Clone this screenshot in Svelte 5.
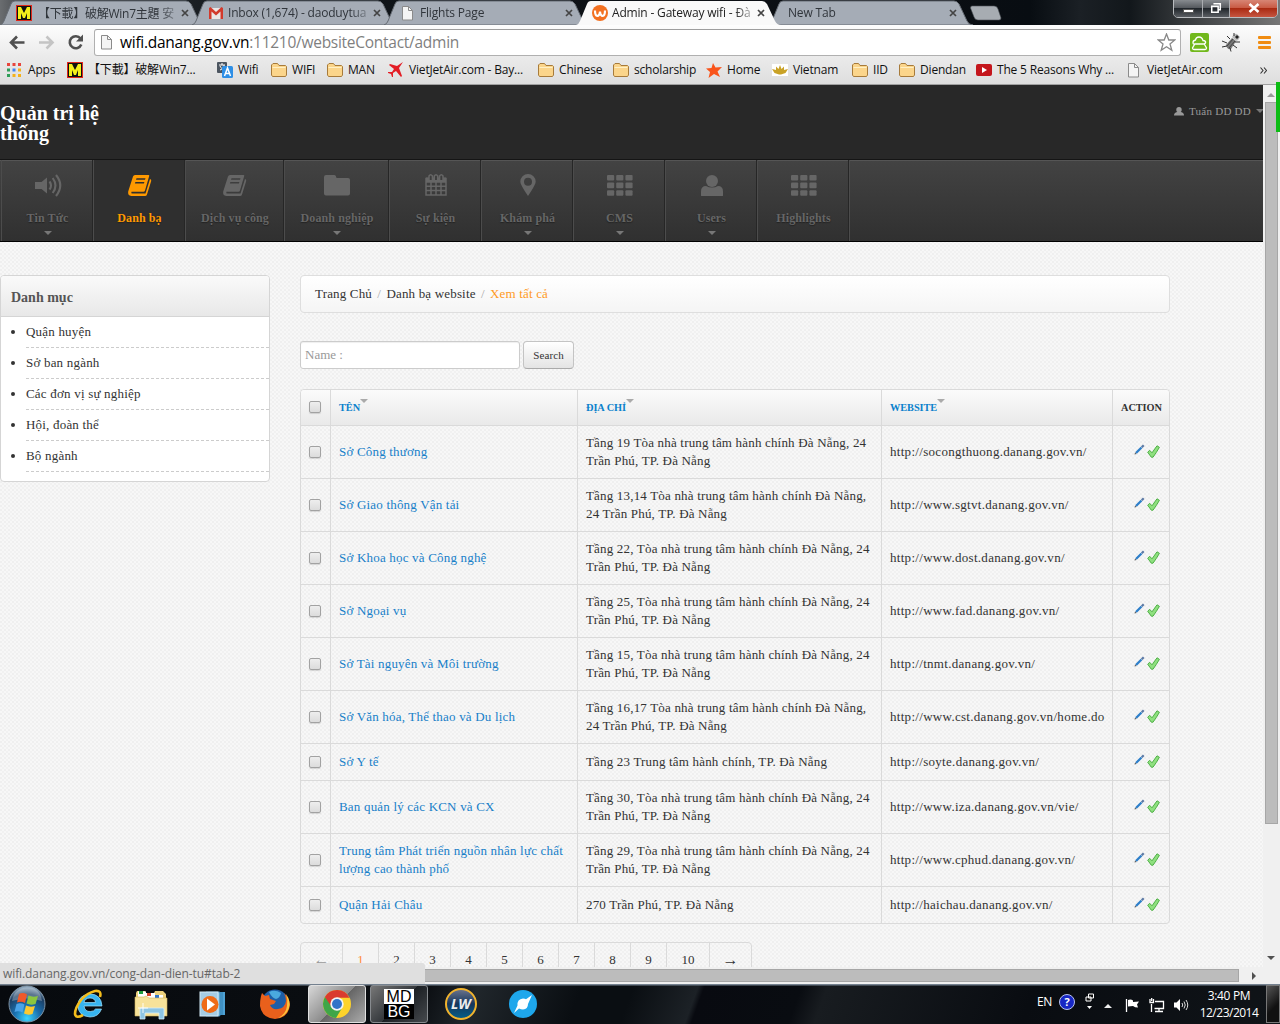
<script>
  const tabs = [
    { icon: 'm', title: '【下載】破解Win7主題 安', cls: 'cjk' },
    { icon: 'gmail', title: 'Inbox (1,674) - daoduytua' },
    { icon: 'page', title: 'Flights Page' },
    { icon: 'w', title: 'Admin - Gateway wifi - Đà', active: true },
    { icon: '', title: 'New Tab' }
  ];
  const bookmarks = [
    { icon: 'apps', label: 'Apps', width: 60 },
    { icon: 'm', label: '【下載】破解Win7...', width: 150 },
    { icon: 'translate', label: 'Wifi', width: 54 },
    { icon: 'folder', label: 'WIFI', width: 56 },
    { icon: 'folder', label: 'MAN', width: 61 },
    { icon: 'vj', label: 'VietJetAir.com - Bay...', width: 150 },
    { icon: 'folder', label: 'Chinese', width: 75 },
    { icon: 'folder', label: 'scholarship', width: 93 },
    { icon: 'star', label: 'Home', width: 66 },
    { icon: 'lotus', label: 'Vietnam', width: 80 },
    { icon: 'folder', label: 'IID', width: 47 },
    { icon: 'folder', label: 'Diendan', width: 77 },
    { icon: 'yt', label: 'The 5 Reasons Why ...', width: 150 },
    { icon: 'page', label: 'VietJetAir.com', width: 132 }
  ];
  const nav = [
    { icon: 'volume', label: 'Tin Tức', width: 92, menu: true },
    { icon: 'book', label: 'Danh bạ', width: 92, active: true },
    { icon: 'book', label: 'Dịch vụ công', width: 99 },
    { icon: 'dir', label: 'Doanh nghiệp', width: 105, menu: true },
    { icon: 'calendar', label: 'Sự kiện', width: 92 },
    { icon: 'pin', label: 'Khám phá', width: 92, menu: true },
    { icon: 'grid', label: 'CMS', width: 92, menu: true },
    { icon: 'user', label: 'Users', width: 92, menu: true },
    { icon: 'grid', label: 'Highlights', width: 92 }
  ];
  const categories = ['Quận huyện', 'Sở ban ngành', 'Các đơn vị sự nghiệp', 'Hội, đoàn thể', 'Bộ ngành'];
  const rows = [
    [['Sở Công thương'], ['Tầng 19 Tòa nhà trung tâm hành chính Đà Nẵng, 24', 'Trần Phú, TP. Đà Nẵng'], 'http://socongthuong.danang.gov.vn/'],
    [['Sở Giao thông Vận tải'], ['Tầng 13,14 Tòa nhà trung tâm hành chính Đà Nẵng,', '24 Trần Phú, TP. Đà Nẵng'], 'http://www.sgtvt.danang.gov.vn/'],
    [['Sở Khoa học và Công nghệ'], ['Tầng 22, Tòa nhà trung tâm hành chính Đà Nẵng, 24', 'Trần Phú, TP. Đà Nẵng'], 'http://www.dost.danang.gov.vn/'],
    [['Sở Ngoại vụ'], ['Tầng 25, Tòa nhà trung tâm hành chính Đà Nẵng, 24', 'Trần Phú, TP. Đà Nẵng'], 'http://www.fad.danang.gov.vn/'],
    [['Sở Tài nguyên và Môi trường'], ['Tầng 15, Tòa nhà trung tâm hành chính Đà Nẵng, 24', 'Trần Phú, TP. Đà Nẵng'], 'http://tnmt.danang.gov.vn/'],
    [['Sở Văn hóa, Thể thao và Du lịch'], ['Tầng 16,17 Tòa nhà trung tâm hành chính Đà Nẵng,', '24 Trần Phú, TP. Đà Nẵng'], 'http://www.cst.danang.gov.vn/home.do'],
    [['Sở Y tế'], ['Tầng 23 Trung tâm hành chính, TP. Đà Nẵng'], 'http://soyte.danang.gov.vn/'],
    [['Ban quản lý các KCN và CX'], ['Tầng 30, Tòa nhà trung tâm hành chính Đà Nẵng, 24', 'Trần Phú, TP. Đà Nẵng'], 'http://www.iza.danang.gov.vn/vie/'],
    [['Trung tâm Phát triển nguồn nhân lực chất', 'lượng cao thành phố'], ['Tầng 29, Tòa nhà trung tâm hành chính Đà Nẵng, 24', 'Trần Phú, TP. Đà Nẵng'], 'http://www.cphud.danang.gov.vn/'],
    [['Quận Hải Châu'], ['270 Trần Phú, TP. Đà Nẵng'], 'http://haichau.danang.gov.vn/']
  ];
  const pages = ['←', '1', '2', '3', '4', '5', '6', '7', '8', '9', '10', '→'];
</script>

{#snippet icon(name)}
  {#if name === 'm'}
    <svg width="16" height="16" viewBox="0 0 16 16"><rect x=".5" y=".5" width="15" height="15" fill="#111" stroke="#e0281c" /><path d="M2 14V2h3l3 6 3-6h3v12h-3V8l-2 5H7L5 8v6z" fill="#f4f01a" /></svg>
  {:else if name === 'gmail'}
    <svg width="16" height="16" viewBox="0 0 16 16"><path d="M1 3h14v11H1z" fill="#e9e6e6" /><path d="M1 14V3l1.500-1L8 7l5.500-5L15 3v11h-2.500V6.500L8 10.500l-4.500-4V14z" fill="#d23a2c" /></svg>
  {:else if name === 'page'}
    <svg width="16" height="16" viewBox="0 0 16 16"><path d="M2.500 1.500h6l4 4v9.500h-10z" fill="#f4f4f4" stroke="#8b8b8b" /><path d="M8.500 1.500v4h4" fill="none" stroke="#8b8b8b" /></svg>
  {:else if name === 'w'}
    <svg width="16" height="16" viewBox="0 0 16 16"><circle cx="8" cy="8" r="8" fill="#f37121" /><path d="M3 5.500c0 7 4.500 7 5 1 .5 6 5 6 5-1" fill="none" stroke="#fff" stroke-width="2.200" /></svg>
  {:else if name === 'apps'}
    <svg width="14" height="14" viewBox="0 0 14 14"><path d="M0 0h3v3H0zM5.500 0h3v3h-3zM11 0h3v3h-3z" fill="#e8453c" /><path d="M0 5.500h3v3H0z" fill="#2f9e58" /><path d="M5.500 5.500h3v3h-3z" fill="#4285f4" /><path d="M11 5.500h3v3h-3zM5.500 11h3v3h-3zM11 11h3v3h-3z" fill="#f5b21a" /><path d="M0 11h3v3H0z" fill="#2f9e58" /></svg>
  {:else if name === 'translate'}
    <svg width="16" height="16" viewBox="0 0 16 16"><rect width="10" height="11" rx="1" fill="#4c5560" /><path d="M2 3h6M5 1v2M3 8c3-1 4-3 4-5M3 4c1 2 2 3 4 4" stroke="#fff" fill="none" /><rect x="5" y="4" width="11" height="12" rx="1.500" fill="#2e8fe6" /><path d="M7.500 14l3-8 3 8M8.500 11.500h4" stroke="#fff" stroke-width="1.500" fill="none" /></svg>
  {:else if name === 'folder'}
    <svg width="16" height="14" viewBox="0 0 16 14"><path d="M.5 12V2L2 .5h4.500L8 2.500h6.500l1 1V12l-1 1.500h-13z" fill="#fbd58b" stroke="#a77b3b" /><path d="M1.500 4.500h13" stroke="#fff0c4" /></svg>
  {:else if name === 'vj'}
    <svg width="16" height="16" viewBox="0 0 16 16"><path d="M15 0l-4 6 3 8-1 1-5-6-3 2v4H4l-1-3-3-1v-1h4l2-3-5-4 1-1 7 2z" fill="#e31d25" /></svg>
  {:else if name === 'star'}
    <svg width="16" height="15" viewBox="0 0 16 15"><path d="M7 0l2.500 4.500L16 4l-4.500 4.500L14 14l-6-3-5.500 4L4 9 0 5.500l5.500-.5z" fill="#f9541b" /></svg>
  {:else if name === 'lotus'}
    <svg width="16" height="12" viewBox="0 0 16 12"><path d="M0 0h16v12H0z" fill="#fff" /><path d="M8 1l1.500 4L12 2.500 12 6l4-1-2.500 4L9 10.500H7L2.500 9 0 5l4 1V2.500L6.500 5z" fill="#c9a227" /></svg>
  {:else if name === 'yt'}
    <svg width="16" height="12" viewBox="0 0 16 12"><rect width="16" height="12" rx="2" fill="#c4161c" /><path d="M6 3l5 3-5 3z" fill="#fff" /></svg>
  {:else if name === 'volume'}
    <svg width="28" height="24" viewBox="0 0 28 24"><path d="M1 9h6.500L13 4.500v16L7.500 16H1z" fill="currentColor" /><path d="M15.500 8.500q3 4 0 8M18.700 5q5.500 7.500 0 15M22 2q8.500 10.500 0 21" fill="none" stroke="currentColor" stroke-width="2.100" /></svg>
  {:else if name === 'book'}
    <svg width="26" height="24" viewBox="0 0 26 24"><g transform="translate(0 .5)"><path fill-rule="evenodd" d="M8 1.500h13.500q1 0 .7 1L18 17q-.4 1.200-1.500 1.200H4.500q-.8 1.800.8 1.900H18.500L23 5.500q1.600.5 1.200 2L20 21q-.5 1.500-2 1.500H4.300Q.5 22 1.200 18L6 3q.5-1.500 2-1.500zM9.500 4.800l-.5 1.500h9l.5-1.500zM8.400 8.400l-.5 1.500h9l.5-1.500z" fill="currentColor" /></g></svg>
  {:else if name === 'dir'}
    <svg width="26" height="24" viewBox="0 0 26 24"><path d="M0 4Q0 2 2 2h8.500q1.500 0 2 3H24q2 0 2 2v13.500q0 2-2 2H2q-2 0-2-2z" fill="currentColor" /></svg>
  {:else if name === 'calendar'}
    <svg width="24" height="24" viewBox="0 0 24 24"><path d="M2 5.500h20v16.500H2zM2 9h20M2 13.200h20M2 17.500h20M7 9v13M12 9v13M17 9v13" fill="none" stroke="currentColor" stroke-width="1.500" /><path d="M2 4.500h20V9H2z" fill="currentColor" /><path d="M5 7V3q1.700-2.500 3.400 0v4M10.300 7V3q1.700-2.500 3.400 0v4M15.600 7V3q1.700-2.500 3.400 0v4" fill="#3d3d3d" stroke="currentColor" stroke-width="1.500" /></svg>
  {:else if name === 'pin'}
    <svg width="16" height="24" viewBox="0 0 16 24"><path fill-rule="evenodd" d="M8 1a7.700 7.700 0 0 1 7.700 7.700Q15.700 11.500 8 23 .3 11.500 .3 8.700A7.700 7.700 0 0 1 8 1zm0 3.800a4 4 0 1 0 0 8 4 4 0 0 0 0-8z" fill="currentColor" /></svg>
  {:else if name === 'grid'}
    <svg width="26" height="24" viewBox="0 0 26 24"><g fill="currentColor">{#each [2, 9.600, 17.200] as y}{#each [0, 9.200, 18.400] as x}<rect {x} {y} width="7.200" height="5.600" rx="1" />{/each}{/each}</g></svg>
  {:else if name === 'user'}
    <svg width="22" height="24" viewBox="0 0 22 24"><circle cx="11" cy="8" r="6" fill="currentColor" /><path d="M0 22.500V18.500q0-5.500 5-5.500 6 3 12 0 5 0 5 5.500v4q0 .5-1 .5H1q-1 0-1-.5z" fill="currentColor" /></svg>
  {/if}
{/snippet}

<div class="screen">
  <div class="tabstrip">
    {#each tabs as t}
      <div class="tab" class:active={t.active}>
        <svg class="shape" width="206" height="25" viewBox="0 0 206 25"><path d="M0 25Q3 24 4 21L11 4Q12 1 15 1H186Q189 1 191 4L199 21Q201 25 205 25z" /></svg>
        {#if t.icon}<span class="fav">{@render icon(t.icon)}</span>{/if}
        <span class="title {t.cls ?? ''}">{t.title}</span>
        <svg class="close" width="8" height="8" viewBox="0 0 8 8"><path d="M1 1l6 6M7 1L1 7" stroke="#444" stroke-width="1.700" /></svg>
      </div>
    {/each}
    <svg class="newtab" width="32" height="16" viewBox="0 0 32 16"><path d="M2 1h22q3 0 4 3l3 9q0 2-2 2H8q-3 0-4-3L.5 3q0-2 1.500-2z" fill="#a7acb2" stroke="#4e5257" stroke-width=".6" /></svg>
    <div class="winbtns">
      <span class="wb min"><i></i></span>
      <span class="wb max"><svg width="12" height="12" viewBox="0 0 14 13"><path d="M4 1.500h8v7h-2M2 4.500h7.500v7H2z" fill="none" stroke="#fff" stroke-width="1.800" /></svg></span>
      <span class="wb x"><svg width="12" height="10" viewBox="0 0 12 10"><path d="M1.500 1l9 8M10.500 1l-9 8" stroke="#fff" stroke-width="2.600" /></svg></span>
    </div>
  </div>

  <div class="toolbar">
    <svg class="navbtns" width="94" height="28" viewBox="0 0 94 28"><g fill="none" stroke-width="2.600"><path d="M24.500 14.500H12M17 8.500l-6 6 6 6" stroke="#505050" /><path d="M39 14.500h13M46.500 8.500l6 6-6 6" stroke="#c4c4c4" /><path d="M80.500 10.500a6 6 0 1 0 .8 6" stroke="#505050" /></g><path d="M83 6.500v7h-7z" fill="#505050" /></svg>
    <div class="omnibox">
      <span class="doc">{@render icon('page')}</span>
      <span class="url"><b>wifi.danang.gov.vn</b>:11210/websiteContact/admin</span>
      <svg width="19" height="19" viewBox="0 0 19 19"><path d="M9.500 1l2.300 6h6l-4.800 4 1.800 6.300-5.300-3.600-5.300 3.600L6 11 1.200 7h6z" fill="#fff" stroke="#888" stroke-width="1.300" /></svg>
    </div>
    <svg class="ext" width="19" height="19" viewBox="0 0 19 19"><rect width="19" height="19" rx="2" fill="#71b81c" /><path d="M4.500 11H14q2-.5 1.500-2.500-1-1-2.500-1-1-3.500-4-3.500T5.500 7Q3 7.500 3 9.500T4.500 11zM4.500 11.500L2.500 15q0 1.500 1.500 1.500h11q1.500 0 1.500-1.500l-2-3.500" fill="none" stroke="#fff" stroke-width="1.300" /></svg>
    <svg class="ext bug" width="20" height="19" viewBox="0 0 20 19"><path d="M4 12l6-7 4 3-5 8q-4 1-5-4z" fill="#777" /><path d="M5 13l6-7M7 15l6-7" stroke="#444" /><path d="M10 4q2-4 5-3l3 3q-1 3-4 4z" fill="#bbb" /><path d="M13 4l2-2 2 2-2 2z" fill="#222" /><path d="M0 8l5 2M0 14l5-1M8 15l1 3.500M11 12l4 3M8 6L5 3M13 9l5 0M12 3V0" stroke="#333" fill="none" /></svg>
    <span class="menu"><i></i><i></i><i></i></span>
  </div>

  <div class="bookmarks">
    {#each bookmarks as b}
      <span class="bm" style:width="{b.width}px"><span class="bi">{@render icon(b.icon)}</span><span class="bl">{b.label}</span></span>
    {/each}
    <svg class="more" width="7" height="7" viewBox="0 0 7 7"><path d="M.5.5l2.500 3-2.500 3M4 .5l2.500 3-2.500 3" fill="none" stroke="#333" stroke-width="1.100" /></svg>
  </div>

  <div class="viewport">
    <div class="page">
      <header>
        <h1>Quản trị hệ thống</h1>
        <div class="account">
          <svg width="10" height="9" viewBox="0 0 10 9"><circle cx="5" cy="2.800" r="2.700" fill="#999" /><path d="M0 8.500Q0 5.500 3 5h4q3 .5 3 3.500z" fill="#999" /></svg>
          <span>Tuấn DD DD</span><i class="caret"></i>
        </div>
      </header>
      <nav>
        {#each nav as n}
          <a class:active={n.active} style:width="{n.width}px">
            <span class="ni">{@render icon(n.icon)}</span>
            <span class="nl">{n.label}</span>
            {#if n.menu}<i class="caret"></i>{/if}
          </a>
        {/each}
      </nav>

      <div class="content">
        <aside>
          <h2>Danh mục</h2>
          <ul>
            {#each categories as c}<li>{c}</li>{/each}
          </ul>
        </aside>
        <main>
          <div class="crumbs"><span>Trang Chủ</span><em>/</em><span>Danh bạ website</span><em>/</em><span class="here">Xem tất cả</span></div>
          <div class="search"><div class="field">Name :</div><div class="btn">Search</div></div>
          <table>
            <colgroup><col class="c1" /><col class="c2" /><col class="c3" /><col class="c4" /><col class="c5" /></colgroup>
            <thead>
              <tr>
                <th><span class="check"></span></th>
                <th class="sort"><div class="head">TÊN<i class="caret"></i></div></th>
                <th class="sort"><div class="head">ĐỊA CHỈ<i class="caret"></i></div></th>
                <th class="sort"><div class="head">WEBSITE<i class="caret"></i></div></th>
                <th><div class="head">ACTION</div></th>
              </tr>
            </thead>
            <tbody>
              {#each rows as [name, address, site]}
                <tr class:single={address.length === 1}>
                  <td><span class="check"></span></td>
                  <td class="name">{#each name as line}<div>{line}</div>{/each}</td>
                  <td class="addr">{#each address as line}<div>{line}</div>{/each}</td>
                  <td class="site">{site}</td>
                  <td>
                    <div class="tools">
                      <svg width="11" height="11" viewBox="0 0 11 11"><path d="M2 9l5.500-5.500" stroke="#2d7fca" stroke-width="2.300" /><path d="M7.700 3.300l2-2" stroke="#5a78a4" stroke-width="2.200" /><path d="M.5 10.500l.6-2 1.400 1.400z" fill="#555" /></svg>
                      <svg class="tick" width="13" height="13" viewBox="0 0 13 13"><path d="M.7 7.200L2.700 5.300 5 7.800 10 .8l2.400 1.500Q9.500 7.500 6 12.200H4.300z" fill="#8fe07f" stroke="#4fb047" stroke-linejoin="round" /></svg>
                    </div>
                  </td>
                </tr>
              {/each}
            </tbody>
          </table>
          <div class="pager">
            {#each pages as p}<span class:prev={p === '←'} class:next={p === '→'} class:current={p === '1'} class:wide={p === '10'}>{p}</span>{/each}
          </div>
        </main>
      </div>
    </div>
    <div class="vscroll"><i class="up"></i><div class="vthumb"></div><i class="down"></i></div>
  </div>
  <div class="hscroll"><div class="hthumb"></div><i></i></div>
  <div class="status">wifi.danang.gov.vn/cong-dan-dien-tu#tab-2</div>
  <div class="marker"></div>

  <div class="taskbar">
    <span class="start">
      <svg width="38" height="38" viewBox="0 0 38 38"><defs><radialGradient id="orb" cx=".5" cy=".9" r=".9"><stop offset="0" stop-color="#39d5ff" /><stop offset=".4" stop-color="#1a6fae" /><stop offset=".75" stop-color="#1c3e63" /><stop offset="1" stop-color="#9fb8cc" /></radialGradient></defs><circle cx="19" cy="19" r="18" fill="url(#orb)" stroke="#7e93a5" /><path d="M4 16Q6 3 19 2.500T34 16q-15-5-30 0z" fill="#fff" opacity=".28" /><path d="M11 9q4-2 8 .5l-2 8.500q-4-2-8-.5z" fill="#f0592a" /><path d="M20.500 10.500q4 2 9.500.5l-2.500 8q-5 1.500-9-.5z" fill="#8cc63f" /><path d="M8.500 19q4-1.500 8 .5l-2 8q-4-2-8-.5z" fill="#4aa3e8" /><path d="M18 20.500q4 2 9 .5l-2.500 8q-4.500 1.500-8.500-.5z" fill="#fdc92f" /></svg>
    </span>
    <span class="app">
      <svg width="34" height="34" viewBox="0 0 34 34"><path d="M30 19H12q1 6 6.500 5.500 3.500 0 5-2.500h6q-3 8-11.500 8Q6 29 6 18.500T18 7q11 0 12 12zM12 15.500h11.500Q23 11 18 11t-6 4.500z" fill="#37b4ef" stroke="#9fe2ff" stroke-width=".7" fill-rule="evenodd" /><path d="M28 10q2-7-5-6-8 2-14 9-6 8-6 14 1 5 8 1" fill="none" stroke="#f4bd1c" stroke-width="2.600" /></svg>
    </span>
    <span class="app">
      <svg width="34" height="32" viewBox="0 0 34 32"><path d="M2 5l1-2h8l1 2h8l1-2h8l3 3v22H2z" fill="#ecd07c" /><path d="M4 3.500h8v6H4zM12 5h9v6h-9zM20 7h9v6h-9z" fill="#fff" /><path d="M5 3h4v3H5z" fill="#1f9c3c" /><path d="M13 5h4v3h-4z" fill="#d8432b" /><path d="M21 7h4v3h-4z" fill="#3377cc" /><path d="M1 9h9l2-1 3 2h18v18H1z" fill="#f7e29a" stroke="#d2b25c" stroke-width=".6" /><path d="M6 31V21q0-1 1-1h22q1 0 1 1v10h-5v-6H11v6z" fill="#8ec5e4" stroke="#d5effc" stroke-width=".8" /><path d="M9 15v10M4 20h10" stroke="#fff" stroke-width=".9" /></svg>
    </span>
    <span class="app">
      <svg width="28" height="28" viewBox="0 0 28 28"><path d="M10 2h16v23H10z" fill="#4ea1d4" /><path d="M7 2h14v24H7zM23 2v23" fill="#80c0e4" stroke="#2f78a8" stroke-width=".8" /><rect x="1" y="2" width="18" height="24" fill="#a5cde5" stroke="#d4e9f5" /><circle cx="11" cy="14.500" r="8.500" fill="#ef6b17" /><path d="M8 8.500l8 6-8 6z" fill="#fff" /></svg>
    </span>
    <span class="app">
      <svg width="32" height="32" viewBox="0 0 32 32"><circle cx="16" cy="15" r="13.500" fill="#1d5ea8" /><path d="M10 4q6-3 12 1-1 5-5 6-4-1-7-7z" fill="#4aa9df" /><path d="M2 8l1-3 3 3 4-1 1 4 6 2-2 3-4 1q2 5 8 4 7-1 8-8 0-4-2-8 5 5 6 11-1 14-15 15Q3 30 1 18q0-6 1-10z" fill="#e9601c" /><path d="M27 6q5 7 3 14-3 8-11 10 8-4 9-12 1-6-1-12z" fill="#fbc53b" /></svg>
    </span>
    <span class="app on">
      <svg width="30" height="30" viewBox="0 0 30 30"><circle cx="15" cy="15" r="14" fill="#fdd32b" /><path d="M15 15L2.900 8A14 14 0 0 0 14 29l6-10z" fill="#3fa648" /><path d="M2.900 8A14 14 0 0 1 27.500 8.700H15L9 17z" fill="#da3b2e" /><circle cx="15" cy="15" r="6.700" fill="#f3f3f3" /><circle cx="15" cy="15" r="5" fill="#3274c8" /></svg>
    </span>
    <span class="app run"><span class="mdbg"><b>MD</b><b class="bg">BG</b></span></span>
    <span class="app"><span class="lw">LW</span></span>
    <span class="app">
      <svg width="28" height="28" viewBox="0 0 28 28"><circle cx="14" cy="14" r="14" fill="#1ea7ec" /><path d="M23 5l-4 9q0 5-5 5.500-2 0-4-1L5 23l3.500-7.500Q8 9 14 8.500q2 0 3 .7z" fill="#fff" /></svg>
    </span>
    <div class="tray">
      <span class="lang">EN</span>
      <span class="help">?</span>
      <svg class="t1" width="11" height="18" viewBox="0 0 11 18"><path d="M3.500 1h5v4h-5zM1 4h5v4H1z" fill="#111" stroke="#fff" /><path d="M2 13h5l-2.500 3z" fill="#fff" /></svg>
      <svg class="t2" width="8" height="4" viewBox="0 0 8 4"><path d="M4 0l4 4H0z" fill="#eee" /></svg>
      <svg class="t3" width="16" height="15" viewBox="0 0 16 15"><path d="M1.500 1v13" stroke="#fff" stroke-width="1.300" /><path d="M3 2q3-1 5 .5V4l6-.5-2 3 1 3q-3 0-5-1.500L3 8.500z" fill="#fff" /></svg>
      <svg class="t4" width="16" height="15" viewBox="0 0 16 15"><path d="M6 3.500h8.500v7H5.500M10 11v2.500M6 13.500h8M2.500 6v8M1 1v3.500h3.500V1M2.700 0v3" fill="none" stroke="#fff" stroke-width="1.300" /></svg>
      <svg class="t5" width="16" height="14" viewBox="0 0 16 14"><path d="M1 4.500h2.500L7 1v12L3.500 9.500H1z" fill="#fff" /><path d="M9 5q1.500 2 0 4M11 3.500q2.500 3.500 0 7M13 2q3.500 5 0 10" fill="none" stroke="#ddd" /></svg>
      <div class="clock"><span>3:40 PM</span><span>12/23/2014</span></div>
      <span class="peek"></span>
    </div>
  </div>
</div>

<style>
  :global(body) { overflow: hidden; }
  .screen { position: relative; width: 1280px; height: 1024px; overflow: hidden; display: flex; flex-direction: column; font-family: 'Open Sans', 'Noto Sans', 'Noto Sans CJK TC', sans-serif; font-size: 12px; color: #111; }
  .screen * { box-sizing: border-box; }
  svg { display: block; flex: none; }

  .tabstrip { height: 25px; flex: none; display: flex; padding-left: 3px; background: linear-gradient(90deg, #6a6d70 0, #3a3d41 30px, #10151a 250px, #0b0e13 900px, #080d12 1030px, #1b2025 1080px, #12171b 1130px, #777 1280px); }
  .tab { position: relative; width: 192px; height: 25px; display: flex; align-items: center; padding-left: 13px; z-index: 1; }
  .tab.active { z-index: 3; }
  .shape { position: absolute; left: -3px; top: 0; fill: #a5acb6; stroke: #666c74; stroke-width: 1; z-index: -1; }
  .active .shape { fill: #f9f9f9; stroke: none; }
  .fav { width: 20px; flex: none; }
  .title { width: 146px; white-space: nowrap; letter-spacing: -0.18px; color: #30353b; mask-image: linear-gradient(90deg, #000 122px, transparent 148px); }
  .active .title { color: #222; }
  .title.cjk { padding-left: 2px; letter-spacing: -0.25px; }
  .tab:nth-child(5) .title { padding-left: 4px; width: 166px; }
  .close { margin-left: -1px; }
  .newtab { margin: 5px 0 0 7px; }
  .winbtns { display: flex; margin: -2px 2px 0 auto; width: 105px; height: 20px; border: 1px solid #b9bcbf; border-radius: 0 0 5px 5px; overflow: hidden; }
  .wb { display: flex; align-items: center; justify-content: center; width: 27px; border-right: 1px solid #a9acb0; background: linear-gradient(#8d9195, #565a5f 48%, #20252a 52%, #5a5e63); }
  .min { width: 29px; }
  .min i { width: 11px; height: 4px; background: #fff; border: 1px solid #555; margin-top: 5px; }
  .x { flex: 1; border: 0; background: linear-gradient(#d98b7b, #c95b45 48%, #a92a12 52%, #c65540); }

  .toolbar { height: 31px; flex: none; display: flex; align-items: center; background: linear-gradient(#fdfdfd, #ebebeb); padding-top: 3px; }
  .omnibox { width: 1087px; height: 27px; border: 1px solid #b0b0b0; border-top-color: #9d9d9d; border-radius: 3px; background: #fff; display: flex; align-items: center; padding: 0 4px; }
  .doc { width: 21px; }
  .url { flex: 1; font-size: 15.5px; letter-spacing: -0.27px; color: #7f7f7f; white-space: nowrap; }
  .url b { font-weight: 400; color: #000; }
  .ext { margin-left: 9px; }
  .bug { margin-left: 13px; }
  .menu { width: 13px; margin-left: 16px; display: flex; flex-direction: column; gap: 2px; }
  .menu i { height: 3px; background: #f08c11; border-radius: 1px; }

  .bookmarks { height: 29px; flex: none; display: flex; align-items: center; background: linear-gradient(#ebebeb, #dedede); border-bottom: 1px solid #a0a0a0; padding-left: 7px; letter-spacing: -0.18px; color: #111; }
  .bm { flex: none; display: flex; align-items: center; white-space: nowrap; }
  .bi { width: 21px; flex: none; }
  .bl { margin-top: -2px; }
  .more { margin: 1px 0 0 2px; }

  .viewport { display: flex; height: 882px; flex: none; overflow: hidden; }
  .page { width: 1263px; overflow: hidden; font: 13px/18px 'Liberation Serif', serif; color: #333; background-color: #f7f7f7; background-image: radial-gradient(circle at 1px 1px, #efefef 0.8px, transparent 1px), radial-gradient(circle at 3px 3px, #f1f1f1 0.8px, transparent 1px); background-size: 4px 4px; }
  header { height: 74px; background: #282828; display: flex; justify-content: space-between; }
  h1 { margin: 18px 0 0; width: 120px; font-size: 20px; line-height: 20px; font-weight: 700; color: #fff; }
  .account { display: flex; align-items: center; height: 20px; margin: 16px -1px 0 0; font-size: 11px; letter-spacing: 0.25px; color: #999; }
  .account span { margin: 0 5px 0 5px; width: 62px; white-space: nowrap; }
  .caret { display: block; border: 4px solid transparent; border-bottom: 0; border-top-color: #777; width: 0; height: 0; }
  nav { height: 83px; display: flex; border-top: 1px solid #151515; border-bottom: 1px solid #000; background: linear-gradient(#434343, #303030); box-shadow: inset 0 1px #555; padding-left: 1px; }
  nav a { height: 81px; display: flex; flex-direction: column; align-items: center; color: #666; font-weight: 700; font-size: 12px; letter-spacing: 0.1px; border-left: 1px solid #4c4c4c; border-right: 1px solid #262626; padding: 13px 0 0 1px; text-shadow: 0 1px 1px #222; }
  nav a:last-child { box-shadow: 1px 0 #4c4c4c; }
  nav a.active { background: #2f2f2f; color: #ff9900; }
  .ni { height: 24px; }
  .nl { margin-top: 12px; line-height: 18px; white-space: nowrap; }
  nav .caret { margin-top: 4px; }

  .content { display: flex; gap: 30px; padding-top: 33px; letter-spacing: 0.2px; }
  aside { width: 270px; height: 207px; border: 1px solid #d5d5d5; border-radius: 4px; background: #fff; overflow: hidden; }
  h2 { margin: 0; height: 41px; padding: 2px 10px 0; font-size: 14px; line-height: 39px; color: #555; border-bottom: 1px solid #d5d5d5; background: linear-gradient(#fafafa, #e8e8e8); letter-spacing: 0; }
  ul { margin: 0; padding: 0 0 0 25px; }
  li { height: 31px; line-height: 30px; border-bottom: 1px dashed #ccc; }
  main { width: 870px; }
  .crumbs { height: 38px; border: 1px solid #dedede; border-radius: 4px; background: linear-gradient(#fff, #f5f5f5); padding: 0 14px; line-height: 36px; display: flex; letter-spacing: 0.17px; }
  .crumbs em { font-style: normal; color: #aaa; margin: 0 5.300px; }
  .here { color: #ff9a1f; }
  .search { display: flex; gap: 3px; margin-top: 28px; height: 28px; }
  .field { width: 220px; border: 1px solid #ccc; border-radius: 3px; background: #fff; color: #999; padding-left: 4px; line-height: 26px; letter-spacing: 0; box-shadow: inset 0 1px 1px #0001; }
  .btn { width: 51px; border: 1px solid #c4c4c4; border-bottom-color: #aaa; border-radius: 4px; background: linear-gradient(#fff, #e4e4e4); font-size: 11px; line-height: 27px; text-align: center; letter-spacing: 0.1px; }
  table { margin-top: 20px; width: 870px; table-layout: fixed; border: 1px solid #dadada; border-radius: 4px; border-spacing: 0; }
  .c1 { width: 29px; } .c2 { width: 247px; } .c3 { width: 304px; } .c4 { width: 231px; } .c5 { width: 57px; }
  th { height: 35px; padding: 0 8px; text-align: left; font-size: 10.3px; letter-spacing: -0.05px; background: linear-gradient(#fbfbfb, #e9e9e9); white-space: nowrap; }
  th:first-child { border-top-left-radius: 3px; }
  th:last-child { border-top-right-radius: 3px; }
  th + th, td + td { border-left: 1px solid #dadada; }
  .sort { color: #0a81cc; }
  .head { display: flex; }
  .head .caret { border-top-color: #aaa; }
  td { height: 53px; padding: 0 8px; border-top: 1px solid #dadada; white-space: nowrap; }
  .single td { height: 37px; }
  .name { color: #1880c9; letter-spacing: 0.19px; }
  .addr { letter-spacing: 0.18px; }
  .site { letter-spacing: 0.3px; }
  .check { display: block; width: 12px; height: 12px; border: 1px solid #a2a2a2; border-radius: 2px; background: linear-gradient(#eee, #dcdcdc); box-shadow: 0 1px 1px #0002; }
  th .check { margin-top: -1px; }
  .tools { display: flex; justify-content: flex-end; gap: 2px; margin-top: -3px; padding-right: 1px; }
  .tick { margin-top: 1px; }
  .pager { display: flex; width: 452px; height: 38px; margin-top: 18px; border: 1px solid #dadada; border-radius: 4px; line-height: 34px; text-align: center; letter-spacing: 0; }
  .pager span { width: 36px; border-left: 1px solid #dadada; }
  .pager .prev { width: 41px; border-left: 0; color: #999; font-size: 16px; }
  .pager .next { width: 42px; font-size: 16px; }
  .pager .wide { width: 43px; }
  .pager .current { color: #ff8a3c; background: #f4f4f4; }

  .vscroll { width: 17px; background: #f0f0f0; padding: 8px 0 0 2px; display: flex; flex-direction: column; }
  .vscroll i, .hscroll i { width: 0; height: 0; border: 4px solid transparent; }
  .vscroll .up { border-top: 0; border-bottom-color: #999; margin-left: 2px; }
  .vthumb { margin-top: 5px; width: 13px; height: 722px; background: #bcbcbc; border: 1px solid #a6a6a6; }
  .vscroll .down { border-bottom: 0; border-top-color: #505050; margin: 132px 0 0 2px; }
  .hscroll { height: 17px; flex: none; background: #f0f0f0; display: flex; align-items: center; }
  .hthumb { width: 1239px; height: 13px; background: #bcbcbc; border: 1px solid #a6a6a6; }
  .hscroll i { border-right: 0; border-left-color: #505050; margin-left: 13px; }
  .status { position: absolute; left: 0; top: 963px; width: 425px; height: 21px; padding-left: 3px; line-height: 21px; background: #dfdfdf; border-top-right-radius: 3px; color: #666; letter-spacing: -0.09px; }
  .marker { position: absolute; right: 0; top: 82px; width: 4px; height: 50px; background: #0cbc14; }

  .taskbar { height: 40px; flex: none; display: flex; background: linear-gradient(#74818f 0, #74818f 1px, transparent 2px), linear-gradient(110deg, #070a0e 0, #0b0e12 33%, #20262b 37%, #0a0e12 45%, #0a0e12 49%, #1c2126 54%, #080a10 54.500%, #090c11 62%, #181c20 64%, #090c11 80%, #101418); }
  .start { width: 60px; padding: 1px 0 0 8px; flex: none; }
  .app { width: 58px; margin-right: 4px; height: 38px; margin-top: 1px; display: flex; align-items: center; justify-content: center; border-radius: 3px; border: 1px solid transparent; }
  .on { border-color: #e0e0e0; background: linear-gradient(135deg, #d7d7d7, #8d8d8d 50%, #666 51%, #aaa); }
  .run { border-color: #878b8f; background: linear-gradient(135deg, #777, #34383c 50%, #1b1f23 51%, #45494d); }
  .mdbg { display: flex; flex-direction: column; width: 30px; height: 30px; background: #000; }
  .mdbg b { font: 400 16px/15px 'Liberation Sans', sans-serif; height: 15px; text-align: center; background: #fff; color: #000; }
  .mdbg .bg { background: #000; color: #fff; }
  .lw { width: 32px; height: 32px; border: 2px solid #f1b32d; border-radius: 50%; background: linear-gradient(#68718a, #16365c 50%, #055d87); color: #eee; font-style: italic; font-weight: 700; font-size: 14px; line-height: 28px; text-align: center; }
  .tray { margin-left: auto; display: flex; align-items: center; color: #fff; }
  .lang { width: 22px; letter-spacing: -0.3px; margin-top: -5px; }
  .help { width: 16px; height: 16px; border-radius: 50%; background: #1727c4; border: 1px solid #b8c2ee; font-weight: 700; font-size: 11px; line-height: 14px; text-align: center; margin-top: -5px; }
  .t1 { margin: -5px 0 0 10px; }
  .t2 { margin: 3px 0 0 8px; }
  .t3 { margin: 2px 0 0 13px; }
  .t4 { margin: 2px 0 0 8px; }
  .t5 { margin: 2px 0 0 8px; }
  .clock { width: 74px; margin-left: 3px; display: flex; flex-direction: column; align-items: center; line-height: 17px; letter-spacing: -0.35px; }
  .clock span:last-child { letter-spacing: -0.5px; }
  .peek { width: 14px; height: 38px; border: 1px solid #777; background: linear-gradient(135deg, #555, #111 60%); }
</style>
